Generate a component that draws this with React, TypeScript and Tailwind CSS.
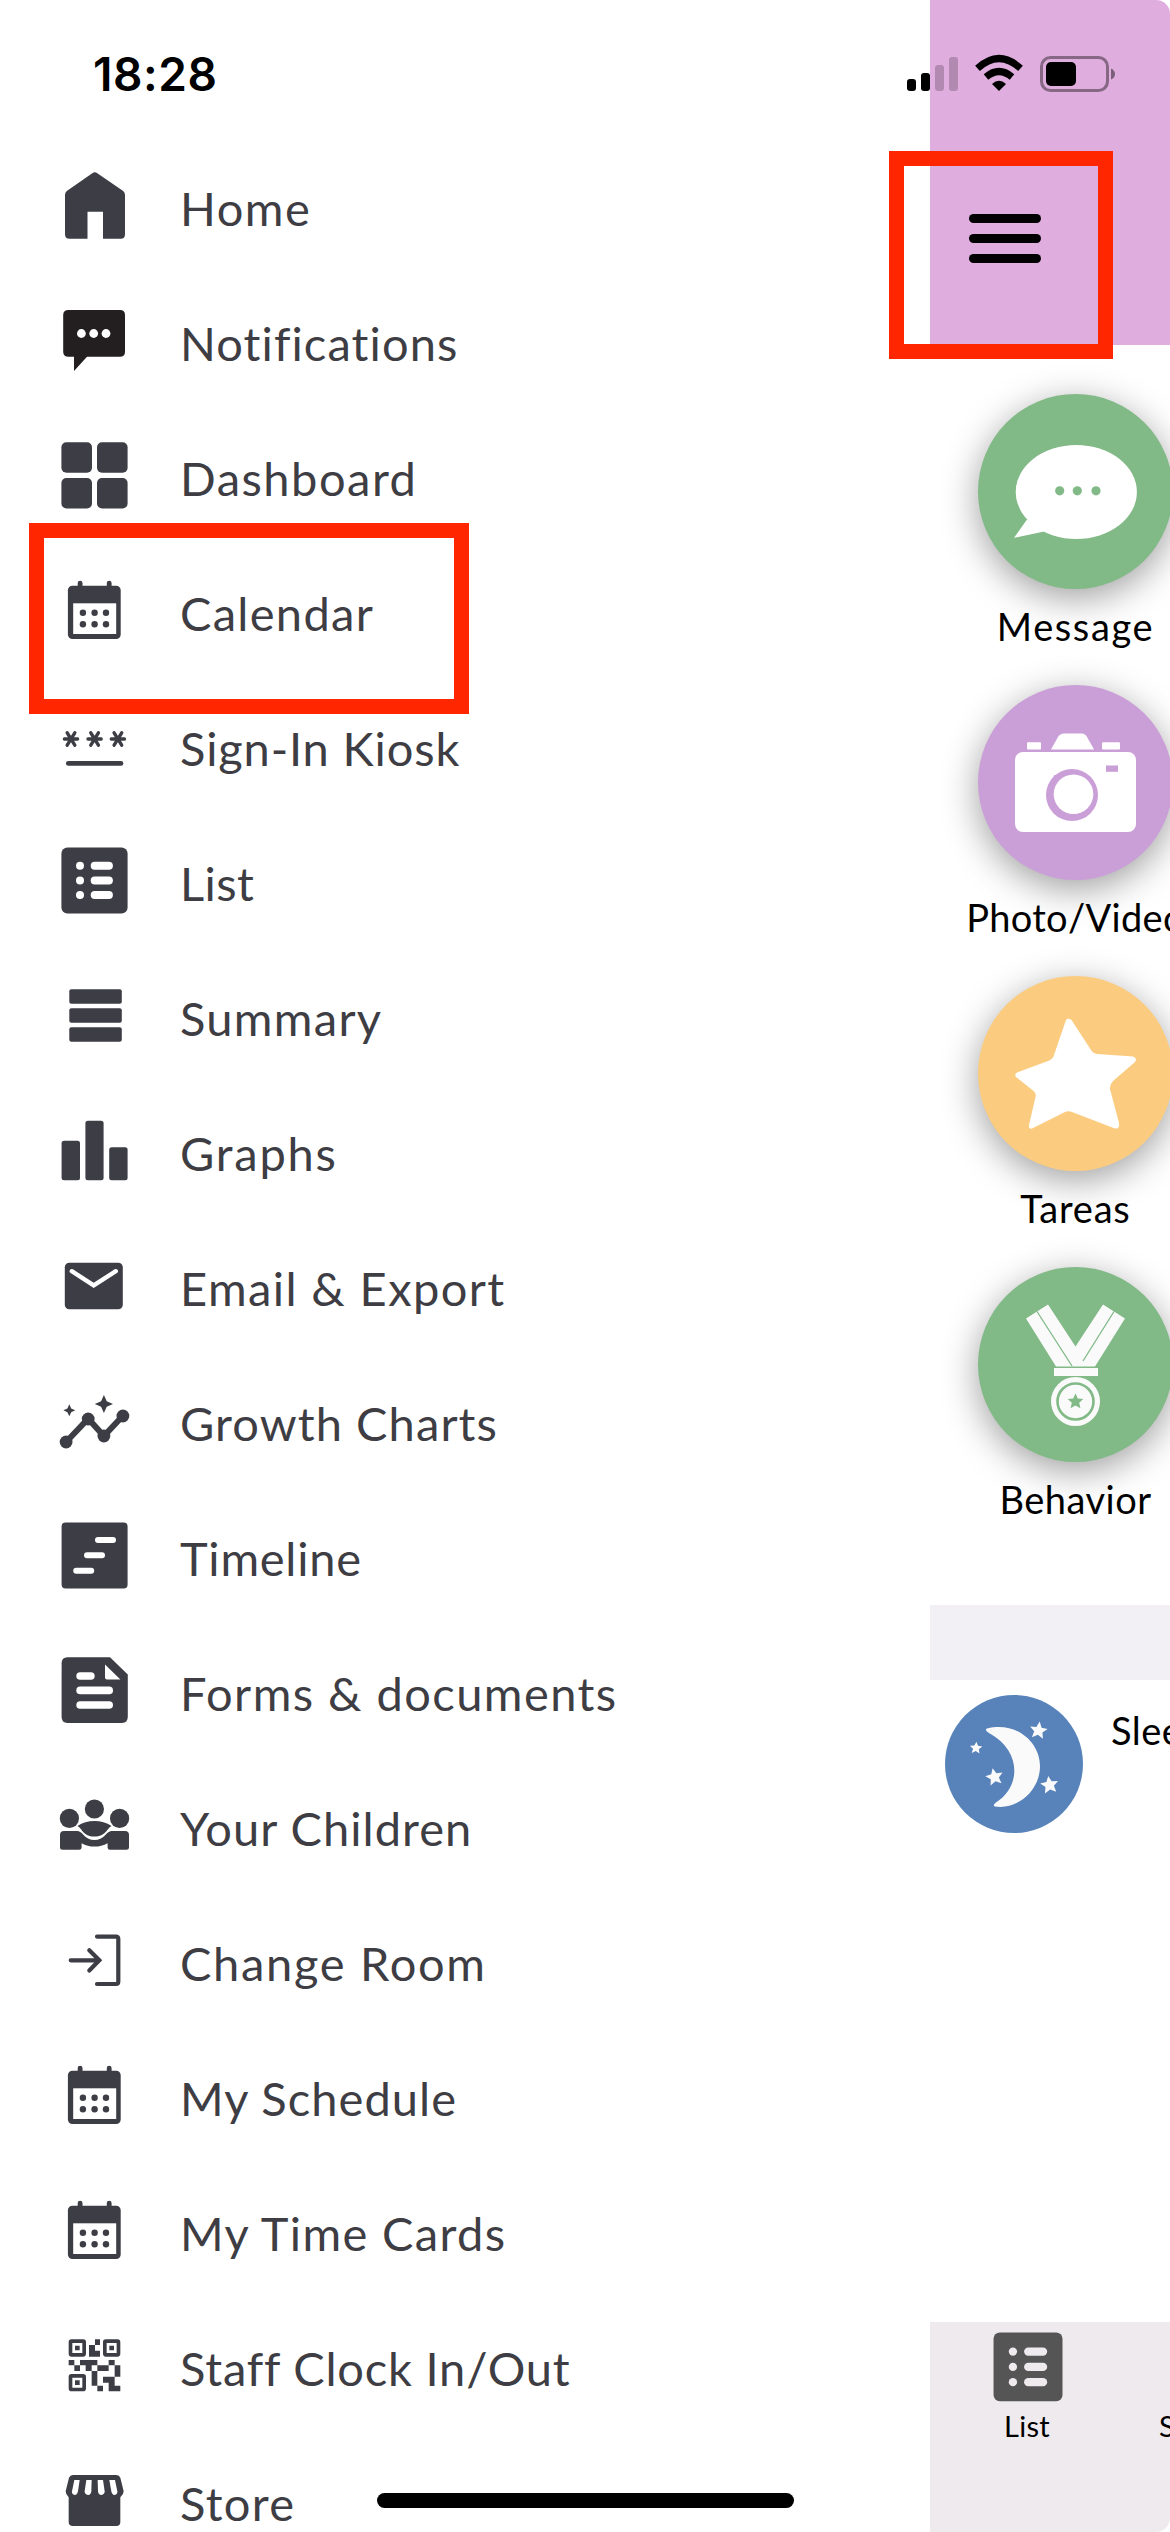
import React from 'react';

interface MenuItem {
  label: string;
  tracking: string;
  icon: React.ReactNode;
}

const calendarIcon = (
  <>
    <rect x="19.7" y="6.7" width="4.8" height="10" rx="2.4" />
    <rect x="48.8" y="6.7" width="4.8" height="10" rx="2.4" />
    <rect x="9.9" y="11.7" width="52.8" height="53.3" rx="4.5" />
    <rect x="15.2" y="29.3" width="43" height="30.7" fill="#fff" />
    {[24.9, 36.6, 48].map((x) => (
      <g key={x}>
        <circle cx={x} cy="38.7" r="3.2" />
        <circle cx={x} cy="50.3" r="3.2" />
      </g>
    ))}
  </>
);

const menuItems: MenuItem[] = [
  {
    label: 'Home',
    tracking: 'tracking-[1.5px]',
    icon: (
      <path d="M34.3 4.2Q36.8 2.2 39.3 4.2L65.2 22Q67 23.5 67 26V65.5Q67 69.7 62.8 69.7H45V42.7H29.5V69.7H11.5Q7 69.7 7 65.2V26Q7 23.5 8.8 22Z" />
    ),
  },
  {
    label: 'Notifications',
    tracking: 'tracking-[1.1px]',
    icon: (
      <g fill="#231f20">
        <path d="M10.5 6H62Q67 6 67 11V48Q67 52.7 62 52.7H29L16 67V52.7H10.5Q5.2 52.7 5.2 48V11Q5.2 6 10.5 6Z" />
        <circle cx="23.4" cy="29.5" r="4.4" fill="#fff" />
        <circle cx="35.7" cy="29.5" r="4.4" fill="#fff" />
        <circle cx="48" cy="29.5" r="4.4" fill="#fff" />
      </g>
    ),
  },
  {
    label: 'Dashboard',
    tracking: 'tracking-[1.5px]',
    icon: (
      <>
        <rect x="3.4" y="3.3" width="30.6" height="30.4" rx="5" />
        <rect x="39" y="3.3" width="30.6" height="30.4" rx="5" />
        <rect x="3.4" y="39" width="30.6" height="30.4" rx="5" />
        <rect x="39" y="39" width="30.6" height="30.4" rx="5" />
      </>
    ),
  },
  { label: 'Calendar', tracking: 'tracking-[1.3px]', icon: calendarIcon },
  {
    label: 'Sign-In Kiosk',
    tracking: 'tracking-[0.85px]',
    icon: (
      <g stroke="#3d3d45" strokeWidth="3.4" strokeLinecap="round">
        {[13, 36.6, 59.9].map((x) => (
          <path key={x} d={`M${x - 6.6} 30H${x + 6.6}M${x - 3.8} 23.8L${x + 3.8} 36.2M${x + 3.8} 23.8L${x - 3.8} 36.2`} />
        ))}
        <path d="M10.3 54.4H63" strokeWidth="4.7" />
      </g>
    ),
  },
  {
    label: 'List',
    tracking: 'tracking-[0.4px]',
    icon: <ListGlyph hole="#fff" />,
  },
  {
    label: 'Summary',
    tracking: 'tracking-[1.3px]',
    icon: (
      <>
        <rect x="11.3" y="10.3" width="52.5" height="14.4" rx="2" />
        <rect x="11.3" y="29.3" width="52.5" height="14.4" rx="2" />
        <rect x="11.3" y="48.3" width="52.5" height="14.4" rx="2" />
      </>
    ),
  },
  {
    label: 'Graphs',
    tracking: 'tracking-[1.8px]',
    icon: (
      <>
        <rect x="3.6" y="26.7" width="18.4" height="39.6" rx="2.5" />
        <rect x="27.4" y="6.7" width="18.2" height="59.6" rx="2.5" />
        <rect x="51.2" y="33.3" width="18.4" height="33" rx="2.5" />
      </>
    ),
  },
  {
    label: 'Email & Export',
    tracking: 'tracking-[1.4px]',
    icon: (
      <>
        <rect x="6.8" y="13.7" width="58" height="46.6" rx="4.5" />
        <path d="M13.8 22.2L35.7 36.4L57.8 22.2" fill="none" stroke="#fff" strokeWidth="4.4" strokeLinecap="round" />
      </>
    ),
  },
  {
    label: 'Growth Charts',
    tracking: 'tracking-[1.1px]',
    icon: (
      <>
        <path d="M8.1 58L30.2 34.7L45.9 52L64.9 31.7" fill="none" stroke="#3d3d45" strokeWidth="6" />
        <circle cx="8.1" cy="58" r="6.4" />
        <circle cx="30.2" cy="35" r="6.4" />
        <circle cx="45.9" cy="52" r="6.4" />
        <circle cx="64.9" cy="32" r="6.4" />
        <path d="M45.9 11L48.7 17.2L55 20L48.7 22.8L45.9 29L43.1 22.8L36.8 20L43.1 17.2Z" />
        <path d="M11.3 20.3L13.2 24.4L17.2 26.3L13.2 28.2L11.3 32.3L9.4 28.2L5.4 26.3L9.4 24.4Z" />
      </>
    ),
  },
  {
    label: 'Timeline',
    tracking: 'tracking-[0.75px]',
    icon: (
      <>
        <rect x="3.6" y="3.6" width="66" height="65.8" rx="4" />
        <g fill="#fff">
          <rect x="37" y="18" width="21" height="6" rx="3" />
          <rect x="26" y="33.3" width="21" height="6" rx="3" />
          <rect x="15.2" y="48.8" width="21" height="6" rx="3" />
        </g>
      </>
    ),
  },
  {
    label: 'Forms & documents',
    tracking: 'tracking-[1.45px]',
    icon: (
      <>
        <path d="M9.5 3.3H52L69.8 20.5V62.7Q69.8 68.9 63.8 68.9H9.5Q3.6 68.9 3.6 62.7V9.3Q3.6 3.3 9.5 3.3Z" />
        <g fill="#fff">
          <path d="M47 10.5L62.4 25.5H49Q47 25.5 47 23.5Z" />
          <rect x="18.3" y="18.2" width="18.4" height="7.6" rx="3.8" />
          <rect x="18.3" y="32.6" width="36.7" height="7.6" rx="3.8" />
          <rect x="18.3" y="47.2" width="36.7" height="7.6" rx="3.8" />
        </g>
      </>
    ),
  },
  {
    label: 'Your Children',
    tracking: 'tracking-[1.05px]',
    icon: (
      <>
        <circle cx="36.4" cy="20" r="9.6" />
        <circle cx="11.4" cy="29.4" r="9.6" />
        <circle cx="61.6" cy="29.4" r="9.6" />
        <path d="M19.4 37Q27 32 36.4 32Q46 32 53.6 37C49 39 48 47.6 36.4 47.6C25 47.6 24 39 19.4 37Z" />
        <path d="M6 42H20C25 43 27 51 36.4 51C46 51 48 43 53 42H67Q71 42 71 46V58.5Q71 60.7 68.5 60.7H52Q49.6 60.7 49.6 58.5V54.2Q43.5 57.6 36.4 57.6Q29.5 57.6 23.6 54.2V58.5Q23.6 60.7 21.2 60.7H4.4Q2 60.7 2 58.5V46Q2 42 6 42Z" />
      </>
    ),
  },
  {
    label: 'Change Room',
    tracking: 'tracking-[1.7px]',
    icon: (
      <g fill="none" stroke="#3d3d45" strokeWidth="4.2" strokeLinecap="round">
        <path d="M39 12.6H58Q60.3 12.6 60.3 15V57.6Q60.3 60 58 60H39" />
        <path d="M12.7 36.3H41M31.3 26.3L41.3 36.3L31.3 46.4" />
      </g>
    ),
  },
  { label: 'My Schedule', tracking: 'tracking-[1.05px]', icon: calendarIcon },
  { label: 'My Time Cards', tracking: 'tracking-[1.35px]', icon: calendarIcon },
  {
    label: 'Staff Clock In/Out',
    tracking: 'tracking-[0.8px]',
    icon: (
      <g transform="translate(-3 1) scale(.3333)">
        <g fill="none" stroke="#3d3d45" strokeWidth="11">
          <rect x="46.5" y="33.5" width="41" height="41" rx="3" />
          <rect x="149.5" y="33.5" width="41" height="41" rx="3" />
          <rect x="46.5" y="137.5" width="41" height="41" rx="3" />
        </g>
        <path d="M60 47h14v14h-14zM163 47h14v14h-14zM60 151h14v14h-14z" />
        <path d="M120 28h15v17h-15zM102 45h18v17h15v18h-33z" />
        <path d="M41 90h17v16h17v17h-17v-17h-17zM75 90h52v16h34v17h-34v-17h-17v17h-18v-17h-17zM161 90h18v16h17v34h-17v-34h-18z" />
        <path d="M110 123h17v44h17v17h-17v-17h-17zM144 140h35v27h17v17h-35v-26h-17z" />
      </g>
    ),
  },
  {
    label: 'Store',
    tracking: 'tracking-[1.3px]',
    icon: (
      <g transform="translate(-3 -134) scale(.3333)">
        <path d="M54 435H184Q193 435 196 443L206 484Q206 494 196 502V576Q196 588 184 588H54Q41 588 41 576V502Q32 494 32 484L42 443Q45 435 54 435Z" />
        <g fill="#fff">
          <path d="M58 450H74L69 484Q67 495 59 495Q50 494 51 484Z" />
          <path d="M94 450H110L109 484Q108 495 99 495Q89 494 89 484Z" />
          <path d="M128 450H144L149 484Q149 494 139 495Q130 495 129 484Z" />
          <path d="M163 450H180L187 484Q188 494 179 495Q171 495 169 484Z" />
        </g>
      </g>
    ),
  },
];

function ListGlyph({ hole }: { hole: string }) {
  return (
    <>
      <rect x="3.4" y="3.4" width="66.2" height="66" rx="6" />
      <g fill={hole}>
        {[21.7, 36.4, 51].map((y) => (
          <g key={y}>
            <circle cx="22" cy={y} r="4" />
            <rect x="32.7" y={y - 4} width="22.2" height="8" rx="4" />
          </g>
        ))}
      </g>
    </>
  );
}

const STAR = 'M0 -10L2.9 -3.6L9.8 -3L4.6 1.6L6.2 8.4L0 4.9L-6.2 8.4L-4.6 1.6L-9.8 -3L-2.9 -3.6Z';

// each drawing sits on a 195 x 195 circle
const actions = [
  {
    label: 'Message',
    tracking: 'tracking-[1.6px]',
    color: 'bg-[#81b987]',
    art: (
      <>
        <ellipse cx="98.3" cy="98" rx="60.6" ry="47" />
        <path d="M49 125.5L36 143.8L66 137.5Z" />
        <g fill="#81b987">
          <circle cx="81.7" cy="96.8" r="4.6" />
          <circle cx="99.3" cy="96.8" r="4.6" />
          <circle cx="118" cy="96.8" r="4.6" />
        </g>
      </>
    ),
  },
  {
    label: 'Photo/Video',
    tracking: 'tracking-[0.3px]',
    color: 'bg-[#ca9fd8]',
    art: (
      <>
        <rect x="37" y="67" width="121" height="80" rx="8" />
        <path d="M73 64.5L80 52Q82 48.5 86 48.5H104Q107 48.5 109 52L116 64.5Z" />
        <rect x="49" y="57.3" width="14" height="7.2" rx="1" />
        <rect x="124" y="57.3" width="18" height="7.2" rx="1" />
        <rect x="128" y="80.5" width="12" height="6.3" fill="#ca9fd8" />
        <path d="M76 90H83L77 93Z" fill="#ca9fd8" />
        <circle cx="94" cy="110" r="26" fill="#ca9fd8" />
        <circle cx="95.5" cy="109.2" r="19.8" />
      </>
    ),
  },
  {
    label: 'Tareas',
    tracking: 'tracking-[0.8px]',
    color: 'bg-[#fbcc80]',
    art: (
      <path d="M88 44Q90 41.5 93.5 44L113 74Q115 77.5 119 78L155 80.5Q159.5 82 157 86L135 105Q130.5 110 132.5 115L141 147Q142 153 137 152.5L94 136Q90.5 134.5 87 136L54 152.5Q50.5 153.5 51 149L57.5 121Q58.5 117 55 114.5L38 101Q36 98.5 39 96.5L70 85Q75 83 76 79Z" />
    ),
  },
  {
    label: 'Behavior',
    tracking: 'tracking-[0.5px]',
    color: 'bg-[#81b987]',
    art: (
      <g fill="#fafafa">
        <path d="M48 51.5L70 37.5L97.5 79.5L125 37.5L147 51.5L117 99.5H78Z" />
        <path d="M59 44.5L94 99M136 44.5L105 94" stroke="#81b987" strokeWidth="1.3" />
        <rect x="76" y="101" width="44" height="8" />
        <circle cx="97.5" cy="134.5" r="24.5" />
        <circle cx="97.5" cy="134.5" r="18" fill="none" stroke="#81b987" strokeWidth="2.6" />
        <path d={STAR} transform="translate(97.5 134.5) scale(.8)" fill="#81b987" />
      </g>
    ),
  },
];

function StatusBar() {
  return (
    <div className="absolute left-0 top-0 flex h-[148px] w-full items-start justify-between pl-[93px] pr-[54px] pt-[50px] text-black">
      <span className="font-['Inter',sans-serif] text-[46px] leading-[49px] font-semibold tracking-[0.6px]">18:28</span>
      <svg width="210" height="46" viewBox="0 0 210 46" className="mt-[3px]">
        <rect x="1" y="26" width="9" height="12" rx="3" />
        <rect x="15" y="20" width="9" height="18" rx="3" />
        <rect x="29" y="12" width="9" height="26" rx="3" opacity=".2" />
        <rect x="43" y="4" width="9" height="34" rx="3" opacity=".2" />
        <path d="M71.5 15.4Q93 -4.4 114.5 15.4" fill="none" stroke="#000" strokeWidth="7" />
        <path d="M80 24Q93 13 106 24" fill="none" stroke="#000" strokeWidth="7" />
        <path d="M93 38L86 31Q93 24.5 100 31Z" />
        <rect x="135.5" y="4.5" width="66" height="33" rx="9" fill="none" stroke="#000" strokeOpacity=".4" strokeWidth="3" />
        <rect x="140" y="9" width="30" height="24" rx="5" />
        <path d="M205 15.5Q209 17.5 209 21Q209 24.5 205 26.5Z" opacity=".45" />
      </svg>
    </div>
  );
}

function Drawer() {
  return (
    <nav className="flex w-[930px] shrink-0 flex-col bg-white pt-[137px]">
      {menuItems.map((item) => (
        <div key={item.label} className="flex h-[135px] shrink-0 items-center pl-[58px]">
          <svg width="72" height="72" viewBox="0 0 72 72" fill="#3d3d45" className="shrink-0 overflow-visible">
            {item.icon}
          </svg>
          <span className={`pt-[6px] pl-[50px] text-[47px] leading-[56px] whitespace-nowrap ${item.tracking}`}>
            {item.label}
          </span>
        </div>
      ))}
    </nav>
  );
}

function HomeScreen() {
  return (
    <main className="flex w-[240px] flex-col overflow-hidden bg-white text-black">
      <header className="flex h-[345px] shrink-0 flex-col gap-[11px] rounded-tr-[14px] bg-[#dfadde] pt-[214px] pl-[39px]">
        <div className="h-[9px] w-[72px] rounded-full bg-black" />
        <div className="h-[9px] w-[72px] rounded-full bg-black" />
        <div className="h-[9px] w-[72px] rounded-full bg-black" />
      </header>

      <section className="flex h-[1260px] shrink-0 flex-col overflow-hidden pt-[49px]">
        {actions.map((action) => (
          <div key={action.label} className="flex h-[291px] w-[291px] shrink-0 flex-col items-center">
            <div className={`size-[195px] rounded-full shadow-[0_9px_36px_rgba(0,0,0,0.38)] ${action.color}`}>
              <svg width="195" height="195" viewBox="0 0 195 195" fill="#fff">
                {action.art}
              </svg>
            </div>
            <span className={`mt-[14px] text-[38px] leading-[46px] ${action.tracking}`}>{action.label}</span>
          </div>
        ))}
      </section>

      <div className="h-[75px] shrink-0 bg-[#f2f0f4]" />

      <section className="flex h-[642px] shrink-0 gap-[28px] pt-[15px] pl-[15px]">
        <div className="size-[138px] shrink-0 rounded-full bg-[#5883ba]">
          <svg width="138" height="138" viewBox="0 0 138 138" fill="#fafafa">
            <path d="M42 33.5C72 26 95 48 95 71C95 96 72 115 50 111.5Q47 110.5 51 107.5C77 91 76 55 44 38Q39 35 42 33.5Z" />
            <path d={STAR} transform="translate(93.5 35.5) rotate(8) scale(.9)" />
            <path d={STAR} transform="translate(31 53) rotate(4) scale(.63)" />
            <path d={STAR} transform="translate(49.5 82) rotate(-12) scale(.9)" />
            <path d={STAR} transform="translate(104.5 90) rotate(-8) scale(.92)" />
          </svg>
        </div>
        <span className="mt-[12px] text-[38px] leading-[46px] tracking-[0.5px]">Sleep</span>
      </section>

      <footer className="flex h-[210px] shrink-0 rounded-br-[14px] bg-[#eeeaed] pt-[7px] pl-[24px]">
        <div className="flex w-[146px] shrink-0 flex-col items-center">
          <svg width="75" height="75" viewBox="0 0 72 72" fill="#555556">
            <ListGlyph hole="#eeeaed" />
          </svg>
          <span className="mt-[4px] text-[29px] leading-[36px] tracking-[0.3px]">List</span>
        </div>
        <span className="mt-[79px] ml-[59px] text-[29px] leading-[36px]">Summary</span>
      </footer>
    </main>
  );
}

export default function App() {
  return (
    <div className="relative flex h-[2532px] w-[1170px] overflow-hidden bg-white font-['Lato','Noto_Sans',sans-serif] text-[#3d3d43]">
      <Drawer />
      <HomeScreen />
      <StatusBar />

      {/* callout frames */}
      <div className="absolute top-[523px] left-[29px] h-[191px] w-[440px] border-[15px] border-[#ff2600]" />
      <div className="absolute top-[151px] left-[889px] h-[208px] w-[224px] border-[15px] border-[#ff2600]" />

      {/* home indicator */}
      <div className="absolute top-[2493px] left-[377px] h-[15px] w-[417px] rounded-full bg-black" />
    </div>
  );
}
